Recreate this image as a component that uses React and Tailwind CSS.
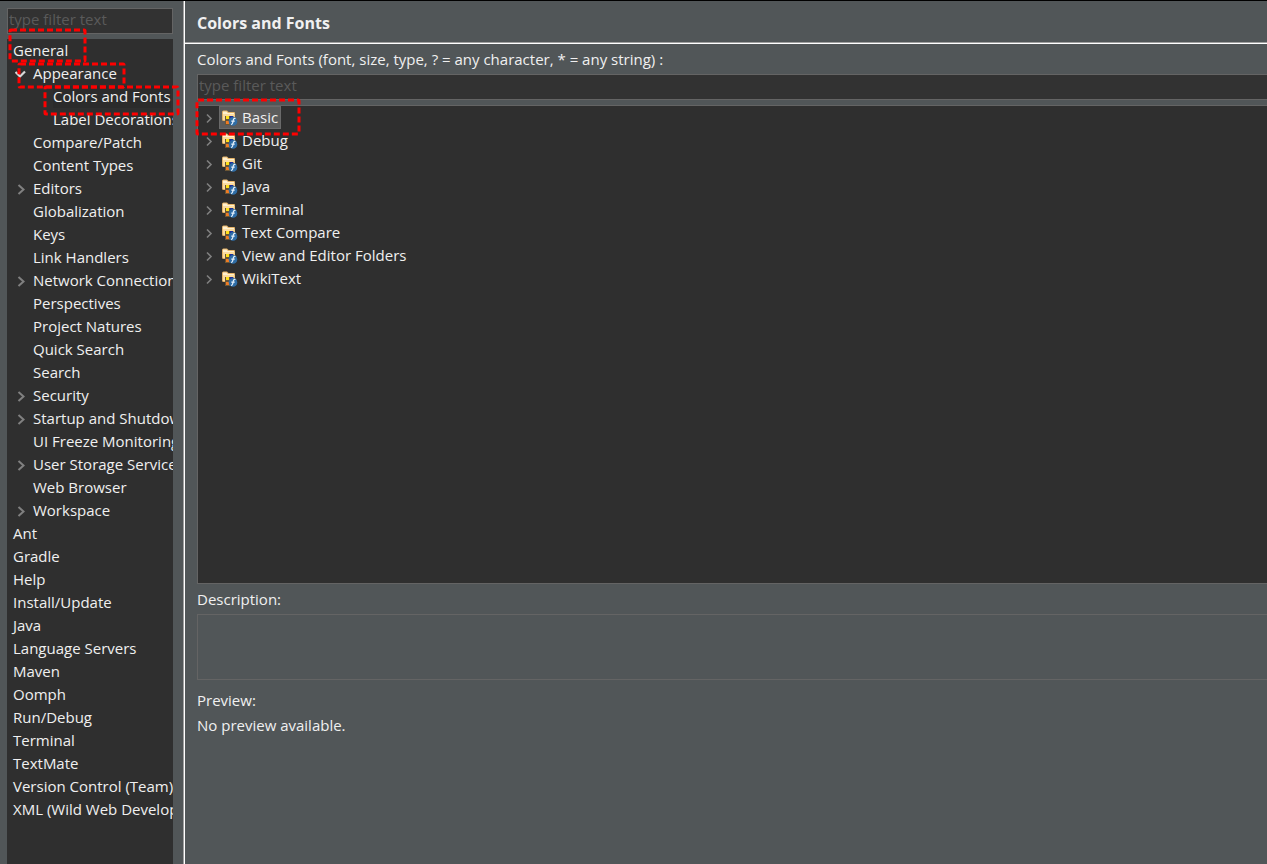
import React from 'react'

const PREFERENCE_PAGES = [
  { label: 'General', level: 0 },
  { label: 'Appearance', level: 1, state: 'open' },
  { label: 'Colors and Fonts', level: 2, selected: true },
  { label: 'Label Decorations', level: 2 },
  { label: 'Compare/Patch', level: 1 },
  { label: 'Content Types', level: 1 },
  { label: 'Editors', level: 1, state: 'closed' },
  { label: 'Globalization', level: 1 },
  { label: 'Keys', level: 1 },
  { label: 'Link Handlers', level: 1 },
  { label: 'Network Connections', level: 1, state: 'closed' },
  { label: 'Perspectives', level: 1 },
  { label: 'Project Natures', level: 1 },
  { label: 'Quick Search', level: 1 },
  { label: 'Search', level: 1 },
  { label: 'Security', level: 1, state: 'closed' },
  { label: 'Startup and Shutdown', level: 1, state: 'closed' },
  { label: 'UI Freeze Monitoring', level: 1 },
  { label: 'User Storage Service', level: 1, state: 'closed' },
  { label: 'Web Browser', level: 1 },
  { label: 'Workspace', level: 1, state: 'closed' },
  { label: 'Ant', level: 0 },
  { label: 'Gradle', level: 0 },
  { label: 'Help', level: 0 },
  { label: 'Install/Update', level: 0 },
  { label: 'Java', level: 0 },
  { label: 'Language Servers', level: 0 },
  { label: 'Maven', level: 0 },
  { label: 'Oomph', level: 0 },
  { label: 'Run/Debug', level: 0 },
  { label: 'Terminal', level: 0 },
  { label: 'TextMate', level: 0 },
  { label: 'Version Control (Team)', level: 0 },
  { label: 'XML (Wild Web Developer)', level: 0 },
]

const CATEGORIES = ['Basic', 'Debug', 'Git', 'Java', 'Terminal', 'Text Compare', 'View and Editor Folders', 'WikiText']

const INDENT = { 0: 'pl-1.5', 1: 'pl-2', 2: 'pl-[46px]' }

function Chevron({ open, small }) {
  let shape = <path d="M3.5 2 L8.5 6.5 L3.5 11" stroke="#808080" strokeWidth="2" />
  if (open) shape = <path d="M0.5 4 L5 8.5 L10 3.5" stroke="#d8d8d8" strokeWidth="2.2" />
  else if (small) shape = <path d="M4 2.5 L8 6.5 L4 10.5" stroke="#808080" strokeWidth="1.6" />
  return (
    <svg className="w-3 h-3 shrink-0" viewBox="0 0 12 12" fill="none" aria-hidden="true">
      {shape}
    </svg>
  )
}

function CategoryIcon() {
  return (
    <svg className="w-4 h-4 shrink-0" viewBox="0 0 16 16" aria-hidden="true">
      <path d="M0 2 Q0 0.5 1.5 0.5 H5 L6.5 2 H12 Q13 2 13 3 V11 H1.5 Q0 11 0 9.5 Z" fill="#e6b468" />
      <path d="M1 1.5 H4.5 L6 3 H12 V4 H1 Z" fill="#fff0cf" />
      <path d="M1 4 H12.5 V10 H1 Z" fill="#fbdca0" />
      <path d="M3 6 H11.5 V15 H3 Z" fill="#6d5634" />
      <rect x="4" y="6" width="3" height="3" fill="#ffe11a" />
      <rect x="8" y="6" width="3" height="3" fill="#1b2f9c" />
      <rect x="4" y="11" width="3" height="3" fill="#f07b22" />
      <circle cx="11" cy="11.4" r="4.3" fill="#2f6da6" />
      <path d="M13.5 8.4 Q11.5 8.2 11.2 10.2 L10.7 12.8 Q10.5 14.4 9 14.3 M9.3 11.2 H12.7" stroke="#e8f2fb" strokeWidth="1.2" fill="none" />
    </svg>
  )
}

// Dashed red frame used to call out a step
function Callout({ className }) {
  return (
    <svg className={`absolute pointer-events-none overflow-visible ${className}`} aria-hidden="true">
      <rect width="100%" height="100%" rx="1" fill="none" stroke="#ff0000" strokeWidth="3" strokeDasharray="6 3" />
    </svg>
  )
}

function PageRow({ page }) {
  return (
    <li role="treeitem" aria-selected={!!page.selected}>
      <button
        type="button"
        className={`flex items-center gap-1.5 w-full h-[23px] text-left whitespace-nowrap ${INDENT[page.level]}`}
      >
        {page.level === 1 && (page.state ? <Chevron open={page.state === 'open'} /> : <span className="w-3 shrink-0" />)}
        <span className={`pb-0.5 ${page.selected ? 'bg-[#2b2b2b]' : ''}`}>{page.label}</span>
      </button>
    </li>
  )
}

function Sidebar() {
  return (
    <aside className="flex flex-col gap-[5px] w-[173px] shrink-0 pl-[7px] pt-[7px]">
      <input
        type="text"
        aria-label="Filter pages"
        placeholder="type filter text"
        className="w-full h-[26px] shrink-0 px-px pb-1 border border-[#646464] bg-[#323232] placeholder:text-[#5a5a5a] outline-none"
      />
      <div className="relative flex-1">
        <ul role="tree" aria-label="Preference pages" className="h-full bg-[#2f2f2f] overflow-hidden">
          {PREFERENCE_PAGES.map((page) => (
            <PageRow key={`${page.level}-${page.label}`} page={page} />
          ))}
        </ul>
        <Callout className="left-[3px] -top-[9px] w-[75px] h-[31px]" />
        <Callout className="left-[12px] top-[25px] w-[105px] h-[23px]" />
        <Callout className="left-[38px] top-[48px] w-[133px] h-[27px]" />
      </div>
    </aside>
  )
}

function CategoryTree() {
  return (
    <div className="relative flex-1 mt-[5px] border border-r-0 border-[#646464] bg-[#2f2f2f]">
      <ul role="tree" aria-label="Colors and fonts">
        {CATEGORIES.map((name, i) => (
          <li key={name} role="treeitem" aria-selected={i === 0} className="flex items-center gap-1 h-[23px] pl-[5px]">
            <Chevron small />
            <button
              type="button"
              className={`flex items-center gap-1 h-[23px] px-0.5 border ${i === 0 ? 'border-[#6a6a6a] bg-[#5c5c5c]' : 'border-transparent'}`}
            >
              <CategoryIcon />
              <span className="pb-0.5">{name}</span>
            </button>
          </li>
        ))}
      </ul>
      <Callout className="-left-px -top-1.5 w-[102px] h-[34px]" />
    </div>
  )
}

export default function App() {
  return (
    <div className="flex min-h-screen overflow-hidden border-t border-black bg-[#515658] text-[#f0f0f0] text-[15px] leading-5 font-['Open_Sans','Noto_Sans',sans-serif]">
      <Sidebar />
      <main className="flex flex-col flex-1 min-w-0 ml-2.5 border-l border-[#a0a0a0]">
        <div className="flex flex-col flex-1 border-l border-white">
          <header className="flex items-center h-[43px] pl-3 pt-0.5 border-b border-white shadow-[inset_0_-1px_0_#a0a0a0]">
            <h1 className="text-base font-bold">Colors and Fonts</h1>
          </header>
          <section className="flex flex-col flex-1 pl-3">
            <label htmlFor="font-filter" className="my-[5px]">
              Colors and Fonts (font, size, type, ? = any character, * = any string) :
            </label>
            <input
              id="font-filter"
              type="text"
              placeholder="type filter text"
              className="h-[26px] px-px pb-1 border border-r-0 border-[#646464] bg-[#323232] placeholder:text-[#5a5a5a] outline-none"
            />
            <CategoryTree />
            <label htmlFor="description" className="my-[5px]">Description:</label>
            <textarea
              id="description"
              readOnly
              className="h-[66px] border border-r-0 border-[#646464] resize-none outline-none"
            />
            <h2 className="mt-2.5">Preview:</h2>
            <p className="mt-[5px] mb-[129px]">No preview available.</p>
          </section>
        </div>
      </main>
    </div>
  )
}
